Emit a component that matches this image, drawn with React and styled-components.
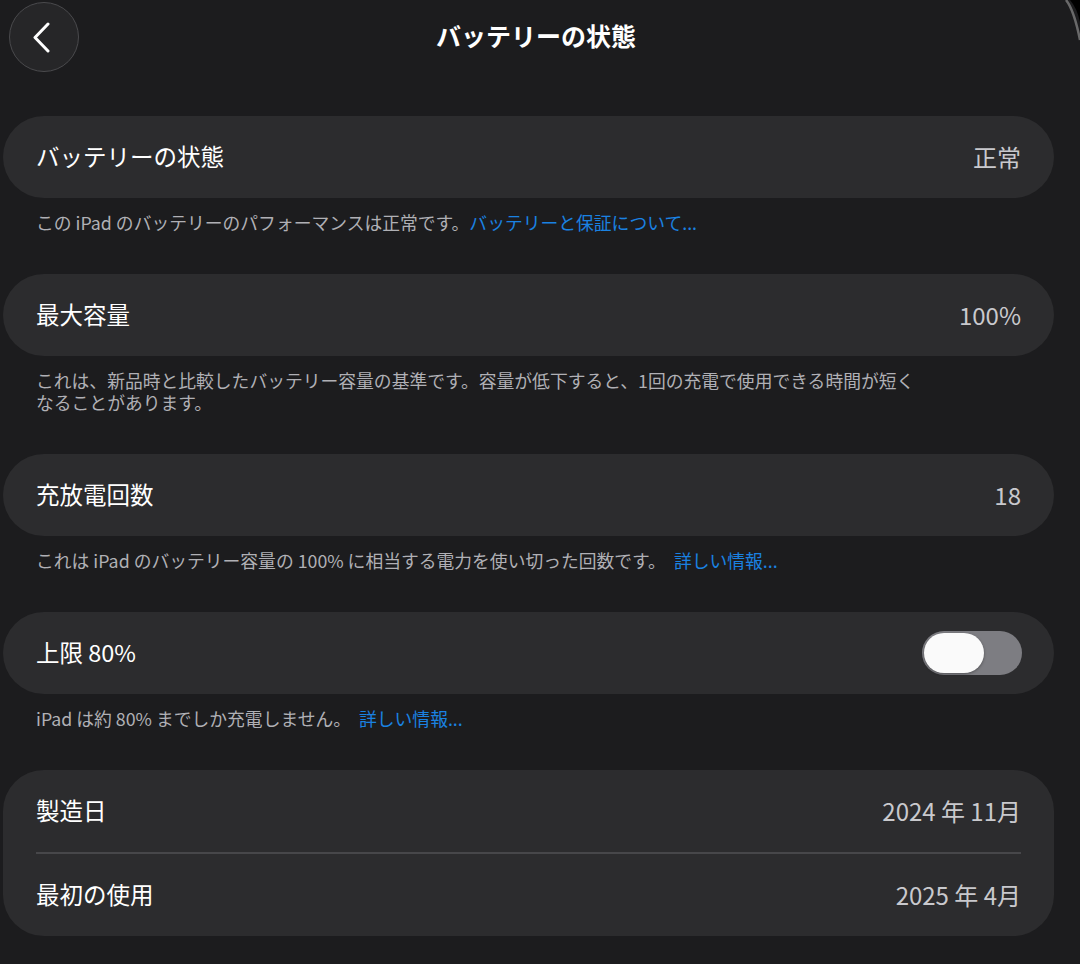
import React from "react";
import styled, { createGlobalStyle } from "styled-components";

const Global = createGlobalStyle`
  html, body { margin: 0; padding: 0; background: #1c1c1e; }
  body { font-family: "Noto Sans CJK JP", "Noto Sans", sans-serif; -webkit-font-smoothing: antialiased; }
`;

const Page = styled.div`
  position: relative;
  width: 1080px;
  min-height: 964px;
  background: #1c1c1e;
  overflow: hidden;
`;

const Header = styled.header`
  position: relative;
  height: 75px;
  display: flex;
  align-items: center;
  justify-content: center;
`;

const BackButton = styled.button`
  position: absolute;
  left: 9px;
  top: 2px;
  width: 70px;
  height: 70px;
  border-radius: 50%;
  border: 1px solid #4a4a4d;
  background: #262628;
  display: flex;
  align-items: center;
  justify-content: center;
  padding: 0;
  cursor: pointer;
`;

const Title = styled.h1`
  margin: 0 0 6px 0;
  font-size: 25px;
  font-weight: 700;
  color: #ffffff;
  transform: translateX(-4px);
`;

const CornerMark = styled.svg`
  position: absolute;
  top: 0;
  right: 0;
`;

const List = styled.main`
  display: flex;
  flex-direction: column;
  gap: 41px;
  padding: 41px 26px 0 3px;
`;

const Section = styled.section`
  display: flex;
  flex-direction: column;
`;

const Card = styled.div`
  background: #2c2c2e;
  border-radius: 41px;
  display: flex;
  flex-direction: column;
  padding: 0 33px;
`;

const Row = styled.div`
  height: 82px;
  display: flex;
  align-items: center;
  justify-content: space-between;
`;

const Divider = styled.div`
  height: 2px;
  background: #47474a;
`;

const Label = styled.span`
  font-size: 23.5px;
  color: #ffffff;
  margin-top: -2px;
`;

const Value = styled.span`
  font-size: 24px;
  color: #c9c9cd;
  margin-top: -2px;
`;

const Footer = styled.p`
  margin: 13px 0 0 33px;
  max-width: 885px;
  font-size: 17.8px;
  line-height: 22px;
  color: #b0b0b5;
`;

const Link = styled.a`
  color: #1a82e2;
  text-decoration: none;
  margin-left: ${(p) => (p.$gap ? "8px" : "0")};
`;

const Toggle = styled.div`
  width: 100px;
  height: 44px;
  border-radius: 22px;
  background: #7d7d82;
  display: flex;
  align-items: center;
  padding: 0 2px;
  box-sizing: border-box;
  margin-right: -1px;
`;

const Knob = styled.div`
  width: 60px;
  height: 40px;
  border-radius: 20px;
  background: #fafafa;
  box-shadow: 0 1px 3px rgba(0, 0, 0, 0.35);
`;

export default function App() {
  return (
    <Page>
      <Global />
      <Header>
        <BackButton aria-label="戻る">
          <svg width="24" height="32" viewBox="0 0 24 32">
            <path d="M16 3 L3 16.5 L16 30" fill="none" stroke="#ffffff" strokeWidth="3" strokeLinecap="round" strokeLinejoin="round" />
          </svg>
        </BackButton>
        <Title>バッテリーの状態</Title>
        <CornerMark width="20" height="50" viewBox="0 0 20 50">
          <path d="M6 0 Q14 10 20 40" fill="none" stroke="#8a8a8a" strokeWidth="2.5" opacity="0.7" />
          <path d="M10 0 Q17 8 20 22 L20 0 Z" fill="#000" />
        </CornerMark>
      </Header>
      <List>
        <Section>
          <Card>
            <Row>
              <Label>バッテリーの状態</Label>
              <Value>正常</Value>
            </Row>
          </Card>
          <Footer>
            この iPad のバッテリーのパフォーマンスは正常です。<Link>バッテリーと保証について...</Link>
          </Footer>
        </Section>
        <Section>
          <Card>
            <Row>
              <Label>最大容量</Label>
              <Value>100%</Value>
            </Row>
          </Card>
          <Footer>
            これは、新品時と比較したバッテリー容量の基準です。容量が低下すると、1回の充電で使用できる時間が短くなることがあります。
          </Footer>
        </Section>
        <Section>
          <Card>
            <Row>
              <Label>充放電回数</Label>
              <Value>18</Value>
            </Row>
          </Card>
          <Footer>
            これは iPad のバッテリー容量の 100% に相当する電力を使い切った回数です。<Link $gap>詳しい情報...</Link>
          </Footer>
        </Section>
        <Section>
          <Card>
            <Row>
              <Label>上限 80%</Label>
              <Toggle>
                <Knob />
              </Toggle>
            </Row>
          </Card>
          <Footer>
            iPad は約 80% までしか充電しません。<Link $gap>詳しい情報...</Link>
          </Footer>
        </Section>
        <Section>
          <Card>
            <Row>
              <Label>製造日</Label>
              <Value>2024 年 11月</Value>
            </Row>
            <Divider />
            <Row>
              <Label>最初の使用</Label>
              <Value>2025 年 4月</Value>
            </Row>
          </Card>
        </Section>
      </List>
    </Page>
  );
}
